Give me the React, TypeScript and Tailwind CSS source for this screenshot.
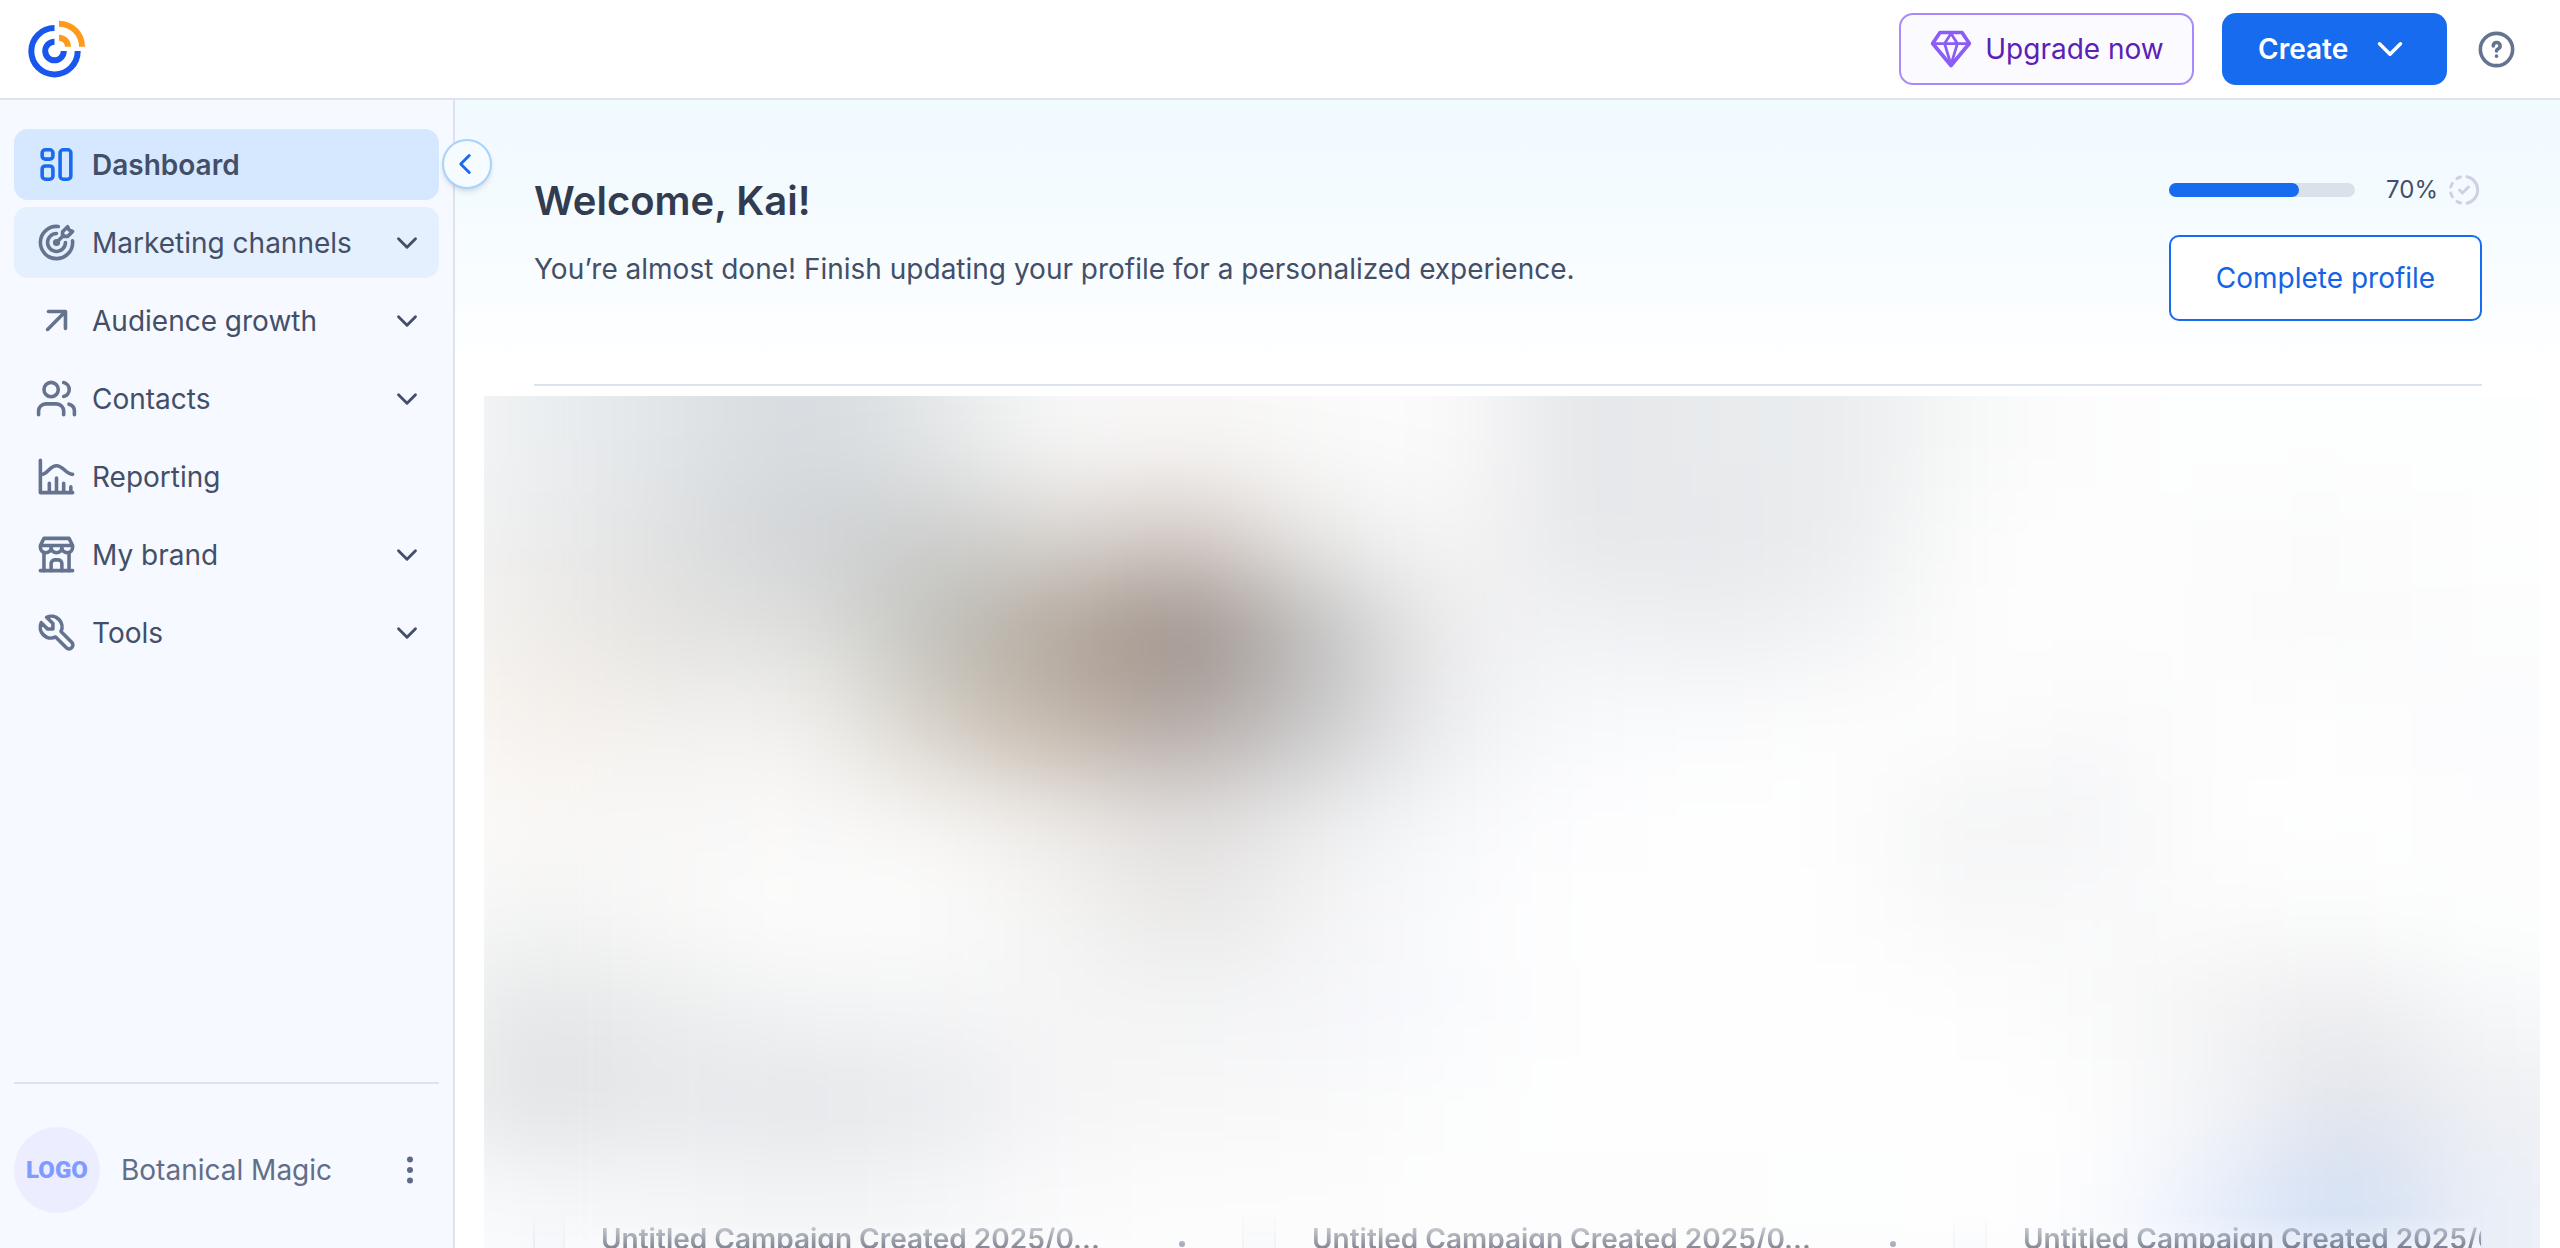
import { useState } from 'react'
import type { ReactNode } from 'react'
import { clsx } from 'clsx'
import { ChevronDown, ChevronLeft } from 'lucide-react'

interface NavItem {
  label: string
  icon: ReactNode
  expandable?: boolean
  highlighted?: boolean
}

function Icon({ children, className, strokeWidth = 2 }: { children: ReactNode; className?: string; strokeWidth?: number }) {
  return (
    <svg
      viewBox="0 0 24 24"
      fill="none"
      stroke="currentColor"
      strokeWidth={strokeWidth}
      strokeLinecap="round"
      strokeLinejoin="round"
      aria-hidden="true"
      className={clsx('shrink-0', className)}
    >
      {children}
    </svg>
  )
}

const NAV_ITEMS: NavItem[] = [
  {
    label: 'Dashboard',
    icon: (
      <>
        <rect x="4" y="3.8" width="6" height="5.2" rx="1.8" />
        <rect x="4" y="12.8" width="6" height="7.400" rx="1.8" />
        <rect x="14" y="3.8" width="6" height="16.400" rx="1.8" />
      </>
    ),
  },
  {
    label: 'Marketing channels',
    expandable: true,
    highlighted: true,
    icon: (
      <>
        <path d="M13 3.05A9 9 0 1 0 20.95 11" />
        <path d="M12 7a5 5 0 1 0 5 5" />
        <circle cx="12" cy="12" r="1" />
        <path d="M12 12l4-4M15.4 8.6V6l2.8-2.8.8 1.8 2 .8-2.8 2.8z" />
      </>
    ),
  },
  {
    label: 'Audience growth',
    expandable: true,
    icon: <path d="M7 17L17 7M7.5 7H17v9.5" />,
  },
  {
    label: 'Contacts',
    expandable: true,
    icon: (
      <>
        <circle cx="9" cy="7" r="4" />
        <path d="M2 21v-2a4 4 0 0 1 4-4h6a4 4 0 0 1 4 4v2" />
        <path d="M16 3.1a4 4 0 0 1 0 7.8M22 21v-2a4 4 0 0 0-3-3.85" />
      </>
    ),
  },
  {
    label: 'Reporting',
    icon: (
      <>
        <path d="M3 3v18h18" />
        <path d="M3.5 10.8C7.2 10.8 8 6 12 6s5 4.8 9 4.8" />
        <path d="M8 20.5v-4.7M12 20.5v-7.7M16 20.5v-4.7M20 20.5v-2.7" />
      </>
    ),
  },
  {
    label: 'My brand',
    expandable: true,
    icon: (
      <>
        <path d="M3 21h18M3 7v1a3 3 0 0 0 6 0V7m0 1a3 3 0 0 0 6 0V7m0 1a3 3 0 0 0 6 0V7H3l2-4h14l2 4" />
        <path d="M5 21V10.85M19 21V10.85M9 21v-4a2 2 0 0 1 2-2h2a2 2 0 0 1 2 2v4" />
      </>
    ),
  },
  {
    label: 'Tools',
    expandable: true,
    icon: <path d="M7 10h3V7L6.5 3.5a6 6 0 0 1 8 8l6 6a2 2 0 0 1-3 3l-6-6a6 6 0 0 1-8-8L7 10" />,
  },
]

const CAMPAIGNS = [
  { id: 1, title: 'Untitled Campaign Created 2025/0...' },
  { id: 2, title: 'Untitled Campaign Created 2025/0...' },
  { id: 3, title: 'Untitled Campaign Created 2025/0...' },
]

// Preview colours, one row of cells per line
const PREVIEW = [
  'eceff1 dfe4e7 d6dade e4e7e8 f9f9f9 f7f6f4 fafafa fcfcfc e4e5e8 e9ecee e9ebed f7f8f8 fdfdfd fdfefe fdfefe fdfefe',
  'ececec dedfe0 d0d3d6 cacccb dad5d1 d2c7c2 ebebea f7f7f7 e6e7e9 e7e8eb eaebed fbfcfb fefefe fcfcfc fbfbfb fefefe',
  'f0ede9 e3e2df e0e1df c0c0b9 b1a599 988b84 c0c0c0 efeff0 f2f3f6 eeeff1 f2f3f5 fcfcfc fefefe fbfcfb fafafa fcfdfd',
  'f6f1ec f3f1ef f4f3f1 d6d0c7 c2b5a8 b3a9a6 c9c9ca eff0f3 f9fafd fbfcfd fdfdfd fdfdfd f9f9fa fdfdfd fefefe fbfbfe',
  'faf8f6 f9f8f7 faf9f9 f7f6f4 eeebe8 dfdcdb edeeef f8f9fc fdfdfe fefefe fefefe f3f4f5 f4f5f7 fefefe fefefe fdfdfe',
  'f3f4f4 f9f9f8 fdfdfd fcfcfc f4f4f3 e8e7e6 f4f4f5 fafbfd fefefe fefefe fefefe f8f8f9 fafafb fbfbfc fbfcfc fdfefe',
  'e5e6e7 ecedee f2f3f4 f3f4f5 f6f6f7 f4f4f5 f5f6fa f9fafd fefefe fefefe fefefe fefefe f9fafa f3f3f4 ebebed f7f8f9',
  'e1e2e4 e8e9eb e4e5e8 e9eaed f5f5f7 f7f7f7 f9f9fa fcfdfd fefefe fefefe fefefe fefefe fefefe f3f4f6 dfe2ea eef0f3',
  'f8f9fb f6f7f9 f3f4f6 f6f7f9 fbfbfc fcfcfc fcfcfc fdfdfd fdfdfe fdfdfd fdfefe fefefe fdfdfe e7eefb cfddf4 ecf0f7',
].map((row) => row.split(' '))

function Logo() {
  return (
    <svg viewBox="0 0 58 58" fill="none" strokeWidth="6" role="img" aria-label="Home" className="size-[58px]">
      <g stroke="#1856ed">
        <path d="M26.5 8A23.2 23.2 0 1 0 49.7 31" />
        <path d="M26.5 21.7A9.3 9.3 0 1 0 35.8 31" />
      </g>
      <g stroke="#ff9a1a">
        <path d="M31 3.7a23 23 0 0 1 23 23" />
        <path d="M31 17.7a9 9 0 0 1 9 9" />
      </g>
    </svg>
  )
}

function TopBar() {
  return (
    <header className="flex h-[100px] shrink-0 items-center justify-between border-b-2 border-[#dde4ee] bg-white pr-[42px] pl-7">
      <a href="#home">
        <Logo />
      </a>
      <div className="flex items-center">
        <button className="flex h-[72px] w-[295px] items-center justify-center gap-3 rounded-[14px] border-2 border-[#a88bfa] bg-[#fbfaff] text-[28px] text-[#5b21b6]">
          <Icon className="size-11 text-[#8b5cf6]">
            <path d="M6 3h12l4 6-10 12L2 9z" />
            <path d="M2 9h20M12 3.5L8.5 9 12 20.5M12 3.5L15.5 9 12 20.5" strokeWidth={1.5} />
          </Icon>
          Upgrade now
        </button>
        <button className="ml-7 flex h-[72px] w-[225px] items-center justify-between rounded-[14px] bg-[#176bee] pr-9 pl-9 text-[28px] font-semibold text-white">
          Create
          <ChevronDown className="size-[42px]" strokeWidth={2} />
        </button>
        <button aria-label="Help" className="ml-7 text-[#64738e]">
          <Icon className="size-[43px]">
            <circle cx="12" cy="12" r="9" />
            <path d="M10.2 10a1.9 1.9 0 1 1 2.7 1.7c-.6.3-.9.6-.9 1.1" />
            <path d="M12 15.6v.1" />
          </Icon>
        </button>
      </div>
    </header>
  )
}

function Sidebar() {
  const [active, setActive] = useState('Dashboard')

  return (
    <aside className="relative flex w-[455px] shrink-0 flex-col border-r-2 border-[#dde3ee] bg-[#f6f9ff] px-[14px] pt-[29px]">
      <nav className="flex flex-col gap-[7px]">
        {NAV_ITEMS.map((item) => {
          const isActive = item.label === active
          return (
            <button
              key={item.label}
              onClick={() => setActive(item.label)}
              className={clsx(
                'flex h-[71px] items-center rounded-[14px] pr-[15px] pl-[21px] text-left text-[28px] text-[#434f68]',
                isActive && 'bg-[#d6e8ff] font-semibold',
                !isActive && item.highlighted && 'bg-[#e5f0fe]',
              )}
            >
              <Icon className={clsx('size-[43px]', isActive ? 'text-[#176bee]' : 'text-[#65738f]')}>{item.icon}</Icon>
              <span className="ml-[14px] flex-1">{item.label}</span>
              {item.expandable && <ChevronDown className="size-[34px]" strokeWidth={2} />}
            </button>
          )
        })}
      </nav>

      <div className="mt-auto flex items-center border-t-2 border-[#dde3ea] pt-[43px] pb-[35px]">
        <span className="flex size-[86px] items-center justify-center rounded-full bg-[#eceeff] font-['Liberation_Sans_Narrow',Roboto,sans-serif] text-2xl font-black text-[#7f9bff]">
          LOGO
        </span>
        <span className="ml-[21px] flex-1 text-[28px] text-[#626e88]">Botanical Magic</span>
        <button aria-label="Account menu" className="mr-2 text-[#5f6b85]">
          <svg viewBox="0 0 42 42" fill="currentColor" className="size-[42px]">
            <circle cx="21" cy="10.5" r="3" />
            <circle cx="21" cy="21" r="3" />
            <circle cx="21" cy="31.5" r="3" />
          </svg>
        </button>
      </div>

      {/* Collapse handle sits on the sidebar edge */}
      <button
        aria-label="Collapse sidebar"
        className="absolute top-[39px] -right-[39px] z-10 flex size-[50px] items-center justify-center rounded-full border-2 border-[#a6d3ff] bg-[#f6fbff] pr-1 text-[#176bee] shadow-md"
      >
        <ChevronLeft className="size-[34px]" strokeWidth={2} />
      </button>
    </aside>
  )
}

function Welcome() {
  const progress = 70

  return (
    <section className="mr-[78px] ml-[79px] flex items-start justify-between border-b-2 border-[#dce3ee] pt-[73px] pb-[63px]">
      <div>
        <h1 className="text-[40px] leading-[56px] font-semibold text-[#323b50]">Welcome, Kai!</h1>
        <p className="mt-5 text-[28px] leading-10 text-[#434f68]">
          You’re almost done! Finish updating your profile for a personalized experience.
        </p>
      </div>
      <div className="w-[313px]">
        <div className="flex h-[34px] items-center">
          <div className="h-[14px] w-[186px] rounded-full bg-[#dae1eb]">
            <div className="h-full rounded-full bg-[#176bee]" style={{ width: `${progress}%` }} />
          </div>
          <span className="ml-auto text-2xl text-[#434f68]">{progress}%</span>
          <Icon className="ml-2 size-[36px] text-[#cdd1e0]">
            <path d="M14 3.2a9 9 0 0 1 0 17.6" />
            <path d="M9.7 3.3A9 9 0 0 0 7.3 4.4M4.2 7.6A9 9 0 0 0 3.2 10M3.2 14a9 9 0 0 0 1 2.4M7.3 19.6a9 9 0 0 0 2.4 1.1M9 12l2 2 4-4" />
          </Icon>
        </div>
        <button className="mt-7 h-[86px] w-full rounded-[10px] border-2 border-[#176bee] bg-white text-[28px] text-[#1463e6]">
          Complete profile
        </button>
      </div>
    </section>
  )
}

function CampaignPreview() {
  return (
    <section className="relative mr-5 ml-[29px] mt-[10px] flex min-h-0 flex-1 flex-col justify-end overflow-hidden">
      <svg viewBox="0 0 16 9" preserveAspectRatio="none" aria-hidden="true" className="absolute inset-0 size-full">
        <defs>
          <filter id="soften" x="-0.2" y="-0.2" width="1.4" height="1.4" colorInterpolationFilters="sRGB">
            <feGaussianBlur stdDeviation="0.48 0.48" />
          </filter>
        </defs>
        <g filter="url(#soften)" shapeRendering="crispEdges">
          {PREVIEW.map((row, y) =>
            row.map((color, x) => (
              <rect
                key={`${x}-${y}`}
                x={x === 0 ? -0.3 : x}
                y={y === 0 ? -2 : y}
                width={x === 0 ? 1.3 : x === 15 ? 3 : 1}
                height={y === 0 || y === 8 ? 3 : 1}
                fill={`#${color}`}
              />
            )),
          )}
        </g>
      </svg>

      {/* Campaign cards fade in from under the preview */}
      <div className="relative mr-[57px] ml-[49px] h-9 overflow-hidden border-x-2 border-[#dde4f2] bg-[#f3f6fc]/60 pl-7 mask-[linear-gradient(to_bottom,transparent,rgb(0_0_0/0.6))]">
        <div className="flex gap-[30px]">
          {CAMPAIGNS.map((campaign) => (
            <article
              key={campaign.id}
              className="flex h-24 w-[681px] shrink-0 items-start justify-between border-x-2 border-[#e8ecf4] bg-white/60 pt-[9px] pr-[57px] pl-9"
            >
              <h2 className="text-[28px] leading-9 font-semibold whitespace-nowrap text-[#323b50]">{campaign.title}</h2>
              <button aria-label="Campaign options" className="mt-5 text-[#5f6b85]">
                <svg viewBox="0 0 6 27" fill="currentColor" className="h-[27px] w-[6px]">
                  <circle cx="3" cy="3" r="3" />
                  <circle cx="3" cy="13.5" r="3" />
                  <circle cx="3" cy="24" r="3" />
                </svg>
              </button>
            </article>
          ))}
        </div>
      </div>
    </section>
  )
}

export default function App() {
  return (
    <div className="flex h-screen flex-col overflow-hidden bg-white font-['Inter',sans-serif]">
      <TopBar />
      <div className="flex min-h-0 flex-1">
        <Sidebar />
        <main className="flex min-w-0 flex-1 flex-col bg-[linear-gradient(to_bottom,#f1faff,#f4fbff_100px,#ffffff_270px)]">
          <Welcome />
          <CampaignPreview />
        </main>
      </div>
    </div>
  )
}
